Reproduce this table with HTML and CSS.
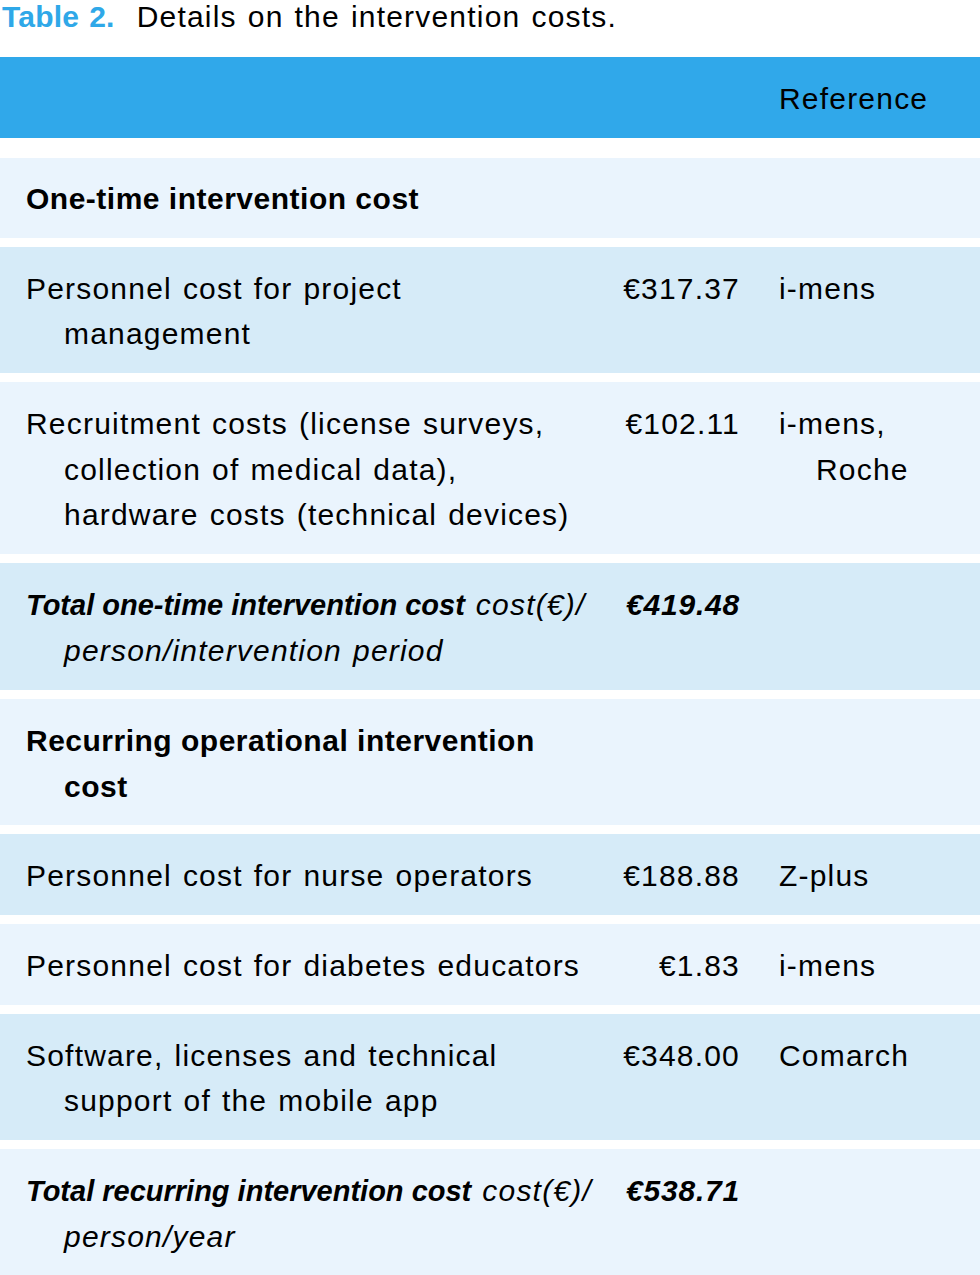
FILE: index.html
```html
<!DOCTYPE html>
<html lang="en">
<head>
<meta charset="utf-8">
<title>Table 2. Details on the intervention costs.</title>
<link rel="stylesheet" href="styles.css">
</head>
<body>
<div class="caption"><span class="label">Table 2.</span> Details on the intervention costs.</div>
<table class="costs">
  <colgroup>
    <col class="c-item">
    <col class="c-amount">
    <col class="c-ref">
  </colgroup>
  <thead>
    <tr>
      <th class="item"></th>
      <th class="amount"></th>
      <th class="ref">Reference</th>
    </tr>
  </thead>
  <tbody>
    <tr class="light">
      <td class="item section" colspan="3">One-time intervention cost</td>
    </tr>
    <tr class="dark">
      <td class="item">Personnel cost for project management</td>
      <td class="amount">€317.37</td>
      <td class="ref">i-mens</td>
    </tr>
    <tr class="light">
      <td class="item">Recruitment costs (license surveys, collection of medical data), hardware costs (technical devices)</td>
      <td class="amount">€102.11</td>
      <td class="ref">i-mens, Roche</td>
    </tr>
    <tr class="dark">
      <td class="item total"><b class="lead">Total one-time intervention cost</b> <i class="unit">cost(€)/</i> <i class="unit">person/intervention period</i></td>
      <td class="amount total"><b>€419.48</b></td>
      <td class="ref"></td>
    </tr>
    <tr class="light">
      <td class="item section">Recurring operational intervention cost</td>
      <td class="amount"></td>
      <td class="ref"></td>
    </tr>
    <tr class="dark">
      <td class="item">Personnel cost for nurse operators</td>
      <td class="amount">€188.88</td>
      <td class="ref">Z-plus</td>
    </tr>
    <tr class="light">
      <td class="item">Personnel cost for diabetes educators</td>
      <td class="amount">€1.83</td>
      <td class="ref">i-mens</td>
    </tr>
    <tr class="dark">
      <td class="item">Software, licenses and technical support of the mobile app</td>
      <td class="amount">€348.00</td>
      <td class="ref">Comarch</td>
    </tr>
    <tr class="light">
      <td class="item total"><b class="lead">Total recurring intervention cost</b> <i class="unit">cost(€)/</i> <i class="unit">person/year</i></td>
      <td class="amount total"><b>€538.71</b></td>
      <td class="ref"></td>
    </tr>
  </tbody>
</table>
</body>
</html>
```

FILE: styles.css
```css
html, body {
  margin: 0;
  padding: 0;
  background: #ffffff;
}

body {
  width: 980px;
  font-family: "Liberation Sans", Arial, sans-serif;
  font-size: 30px;
  letter-spacing: 1.2px;
  word-spacing: 1.5px;
  color: #000000;
}

.caption {
  margin: 0 0 14px 2px;
  line-height: 34px;
  white-space: nowrap;
}

.caption .label {
  color: #2fa8e8;
  font-weight: bold;
  letter-spacing: 0.2px;
  margin-right: 11px;
}

.costs {
  width: 980px;
  table-layout: fixed;
  border-collapse: separate;
  border-spacing: 0 9px;
}

.c-item { width: 598px; }
.c-amount { width: 142px; }
.c-ref { width: 240px; }

.costs th,
.costs td {
  padding: 18.8px 0 16.4px;
  line-height: 45.5px;
  vertical-align: top;
  text-align: left;
  font-weight: normal;
}

.costs thead th {
  background: #30a8ea;
  height: 45px;
  padding-top: 19px;
  padding-bottom: 16px;
  border-bottom: 11px solid #ffffff;
}

.costs .item {
  padding-left: 64px;
  padding-right: 2px;
  text-indent: -38px;
}

.costs .amount {
  text-align: right;
}

.costs .ref {
  padding-left: 76px;
  padding-right: 10px;
  text-indent: -37px;
}

.light td { background: #eaf4fd; }
.dark td { background: #d6ebf8; }

.costs .section {
  font-weight: bold;
  letter-spacing: 0.5px;
  word-spacing: 0;
}

.costs .total {
  font-style: italic;
}

.costs .total .lead {
  font-weight: bold;
  font-size: 29px;
  letter-spacing: 0;
  word-spacing: 0;
}

.costs .total .unit {
  font-style: italic;
}

.costs .amount.total b {
  font-size: 30px;
  letter-spacing: 0.8px;
}
```
